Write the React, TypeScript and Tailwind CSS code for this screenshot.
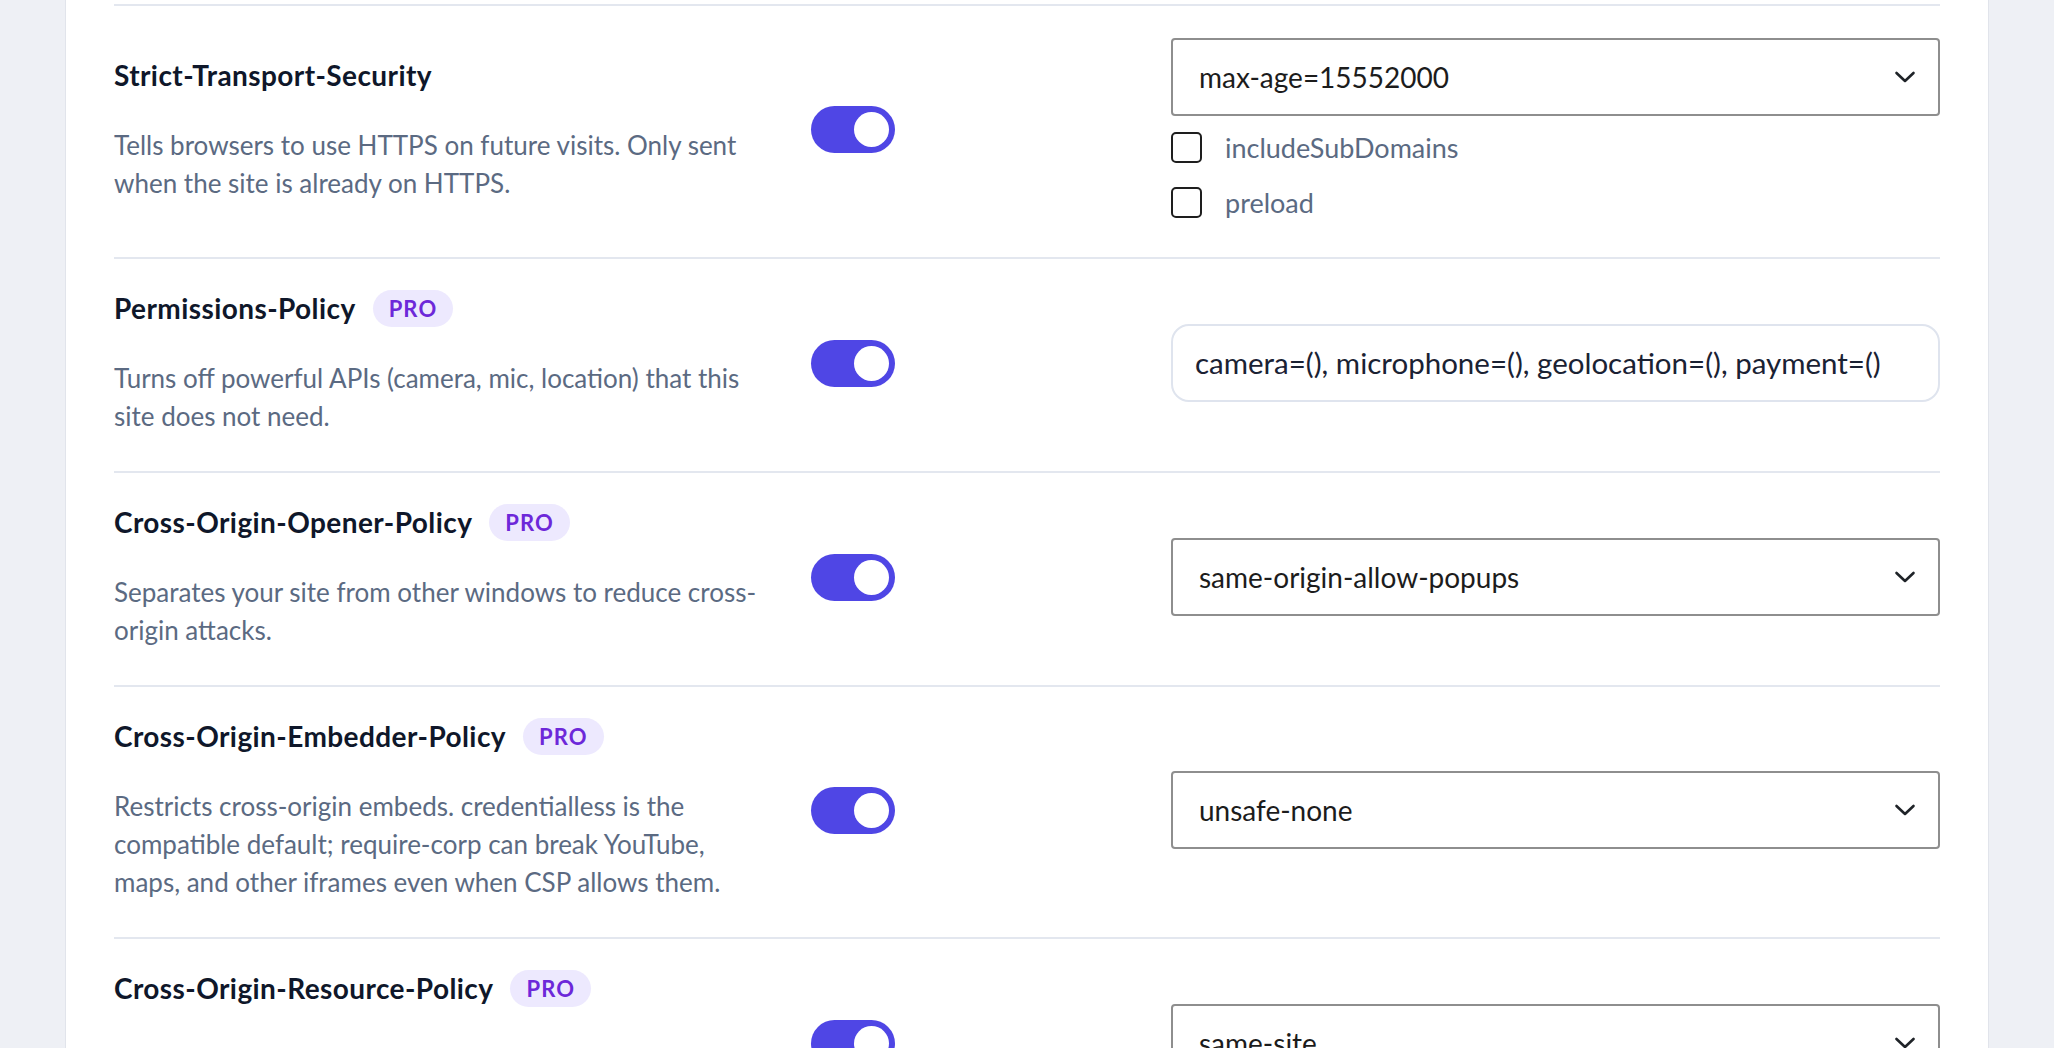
import React from 'react';

type Control =
  | { kind: 'select'; value: string; checks?: string[] }
  | { kind: 'input'; value: string };

interface HeaderRow {
  name: string;
  pro?: boolean;
  lines: string[];
  control: Control;
}

const ROWS: HeaderRow[] = [
  {
    name: 'Strict-Transport-Security',
    lines: ['Tells browsers to use HTTPS on future visits. Only sent', 'when the site is already on HTTPS.'],
    control: { kind: 'select', value: 'max-age=15552000', checks: ['includeSubDomains', 'preload'] },
  },
  {
    name: 'Permissions-Policy',
    pro: true,
    lines: ['Turns off powerful APIs (camera, mic, location) that this', 'site does not need.'],
    control: { kind: 'input', value: 'camera=(), microphone=(), geolocation=(), payment=()' },
  },
  {
    name: 'Cross-Origin-Opener-Policy',
    pro: true,
    lines: ['Separates your site from other windows to reduce cross-', 'origin attacks.'],
    control: { kind: 'select', value: 'same-origin-allow-popups' },
  },
  {
    name: 'Cross-Origin-Embedder-Policy',
    pro: true,
    lines: [
      'Restricts cross-origin embeds. credentialless is the',
      'compatible default; require-corp can break YouTube,',
      'maps, and other iframes even when CSP allows them.',
    ],
    control: { kind: 'select', value: 'unsafe-none' },
  },
  {
    name: 'Cross-Origin-Resource-Policy',
    pro: true,
    lines: ['Limits which sites can load your files, images and', 'scripts directly.'],
    control: { kind: 'select', value: 'same-site' },
  },
];

function Toggle() {
  return (
    <div className="flex h-[47px] w-[84px] shrink-0 items-center justify-end rounded-full bg-[#4f46e5] px-[6px]">
      <div className="h-[35px] w-[35px] rounded-full bg-white" />
    </div>
  );
}

function Chevron() {
  return (
    <svg width="22" height="14" viewBox="0 0 22 14" fill="none" className="shrink-0">
      <path d="M2.5 3 L11 11 L19.5 3" stroke="#1f2328" strokeWidth="2.6" strokeLinecap="round" strokeLinejoin="round" />
    </svg>
  );
}

function SelectBox({ value }: { value: string }) {
  return (
    <div className="flex h-[78px] w-full items-center justify-between rounded-[4px] border-2 border-[#8e8e8e] bg-white pl-[26px] pr-[22px]">
      <span className="text-[28px] leading-none text-[#1c1c1c]">{value}</span>
      <Chevron />
    </div>
  );
}

function Check({ label }: { label: string }) {
  return (
    <div className="flex h-[38px] items-center gap-[23px]">
      <div className="h-[31px] w-[31px] rounded-[5px] border-2 border-[#1e1e1e] bg-white" />
      <span className="text-[27px] leading-none text-[#5b6a82]">{label}</span>
    </div>
  );
}

function ControlCell({ control }: { control: Control }) {
  if (control.kind === 'input') {
    return (
      <div className="flex h-[78px] w-full items-center rounded-[18px] border-2 border-[#dfe4ee] bg-white pl-[22px]">
        <span className="whitespace-nowrap text-[29.5px] leading-none text-[#1a2233]">{control.value}</span>
      </div>
    );
  }
  return (
    <div className="flex w-full flex-col">
      <SelectBox value={control.value} />
      {control.checks && (
        <div className="mt-[12px] flex flex-col gap-[17px]">
          {control.checks.map((c) => (
            <Check key={c} label={c} />
          ))}
        </div>
      )}
    </div>
  );
}

function Row({ row }: { row: HeaderRow }) {
  return (
    <div className="flex items-center border-t-2 border-[#e3e7ef] pt-[32px] pb-[36px]">
      <div className="flex w-[681px] shrink-0 flex-col">
        <div className="flex h-[37px] items-center gap-[17px]">
          <span className="-mt-[3px] text-[28px] font-bold leading-none tracking-[0.015em] text-[#0f172a]">
            {row.name}
          </span>
          {row.pro && (
            <span className="-mt-[2px] flex h-[37px] items-center rounded-full bg-[#ede9fe] px-[16px] text-[22px] font-bold tracking-[0.05em] text-[#6d28d9]">
              PRO
            </span>
          )}
        </div>
        <p className="mt-[31px] whitespace-nowrap text-[26px] leading-[38px] text-[#5b6a82]">
          {row.lines.map((l, i) => (
            <React.Fragment key={i}>
              {l}
              {i < row.lines.length - 1 && <br />}
            </React.Fragment>
          ))}
        </p>
      </div>
      <div className="ml-[16px]">
        <Toggle />
      </div>
      <div className="ml-auto w-[769px]">
        <ControlCell control={row.control} />
      </div>
    </div>
  );
}

export default function App() {
  return (
    <div
      className="h-[1048px] overflow-hidden bg-[#eef0f5] px-[65px]"
      style={{ fontFamily: 'Lato, "Noto Sans", sans-serif' }}
    >
      <div className="min-h-full border-x border-[#e1e4eb] bg-white px-[48px] pt-[4px]">
        {ROWS.map((r) => (
          <Row key={r.name} row={r} />
        ))}
      </div>
    </div>
  );
}
